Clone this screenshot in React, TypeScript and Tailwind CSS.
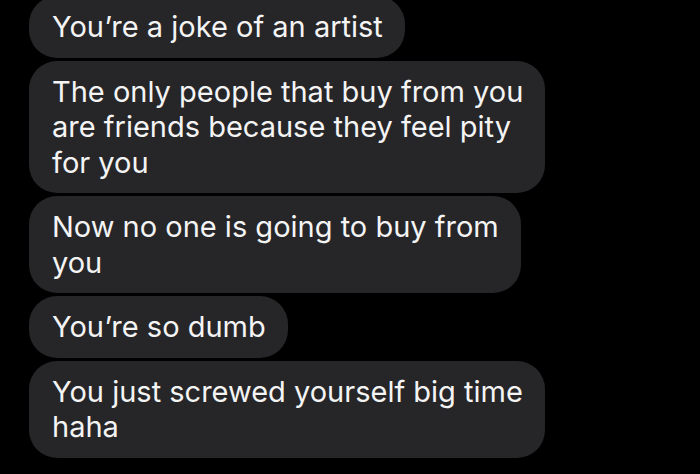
import React from 'react';

const messages: string[][] = [
  ['You\u2019re a joke of an artist'],
  ['The only people that buy from you', 'are friends because they feel pity', 'for you'],
  ['Now no one is going to buy from', 'you'],
  ['You\u2019re so dumb'],
  ['You just screwed yourself big time', 'haha'],
];

const Bubble: React.FC<{ lines: string[] }> = ({ lines }) => (
  <div className="w-fit rounded-[28px] bg-[#262629] pl-[23px] pr-[22px] py-[13px] text-[29px] leading-[35.5px] text-[#f4f4f4] whitespace-nowrap">
    {lines.map((line, i) => (
      <div key={i}>{line}</div>
    ))}
  </div>
);

export default function App() {
  return (
    <div
      className="w-[700px] h-[474px] overflow-hidden bg-black"
      style={{ fontFamily: 'Inter, "Liberation Sans", sans-serif' }}
    >
      <div className="-mt-[4px] flex flex-col gap-[3px] pl-[29px]">
        {messages.map((lines, i) => (
          <Bubble key={i} lines={lines} />
        ))}
      </div>
    </div>
  );
}
